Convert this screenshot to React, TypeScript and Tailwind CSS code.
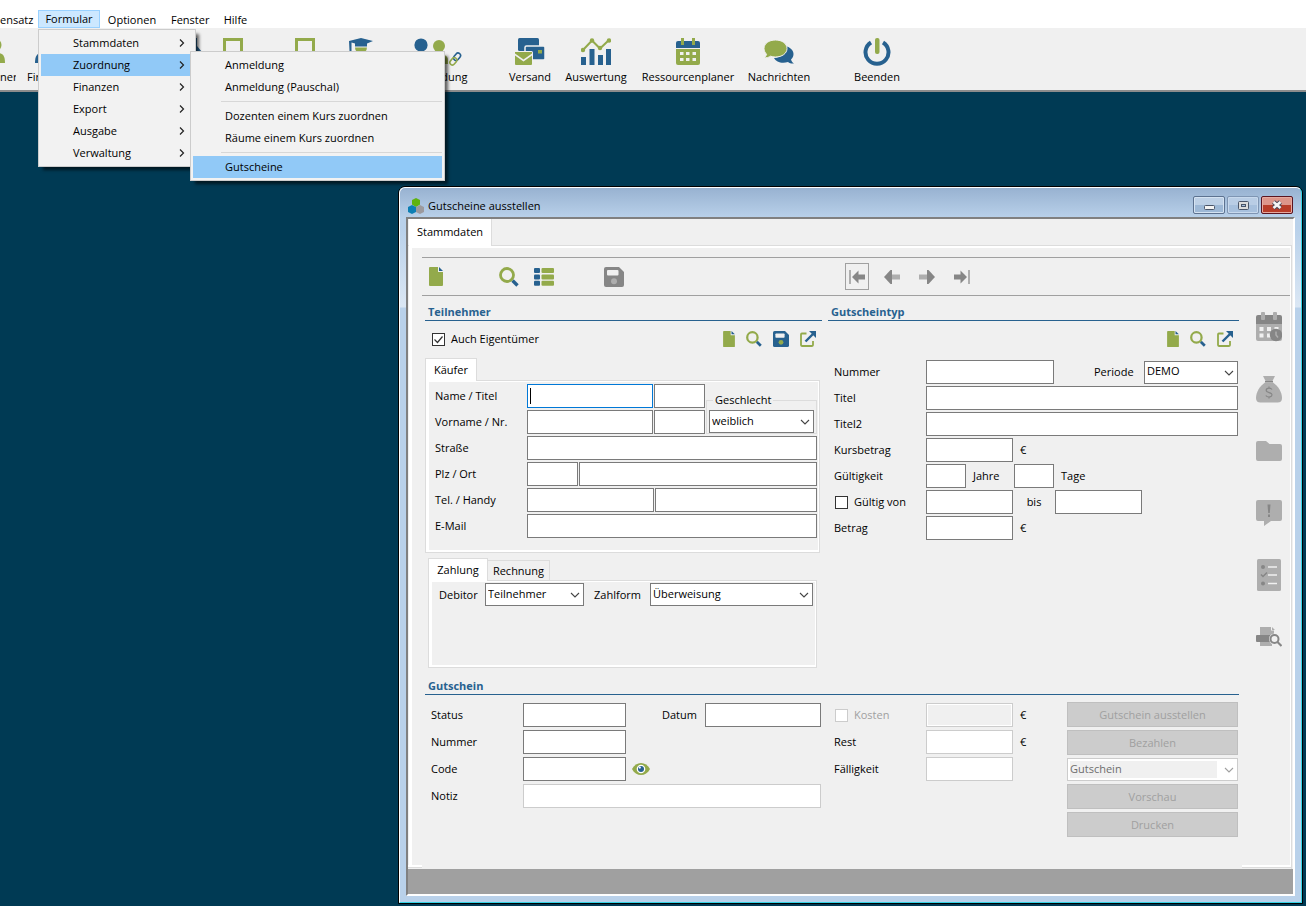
import React, { useState } from 'react';

const GREEN = '#93aa4b';
const BLUE = '#27618f';

type IconProps = { className?: string };

const FileIcon: React.FC<IconProps> = ({ className }) => (
    <svg viewBox="0 0 14 19" className={className}>
        <path d="M1 0h8v5h5v13a1 1 0 0 1-1 1H1a1 1 0 0 1-1-1V1a1 1 0 0 1 1-1z" fill={GREEN} />
        <path d="M10 0l4 4h-4z" fill={BLUE} />
    </svg>
);

const SearchIcon: React.FC<IconProps> = ({ className }) => (
    <svg viewBox="0 0 20 20" className={className}>
        <path d="M13.5 13.5l5 5" stroke={BLUE} strokeWidth="3.4" />
        <circle cx="8" cy="8" r="6.5" fill="none" stroke={GREEN} strokeWidth="2.8" />
    </svg>
);

const ListIcon: React.FC<IconProps> = ({ className }) => (
    <svg viewBox="0 0 20 18" className={className}>
        {[0, 6.4, 12.8].map((y) => (
            <g key={y}>
                <rect x="0" y={y} width="6" height="5" rx="1" fill={BLUE} />
                <rect x="7.5" y={y} width="12.5" height="5" rx="1" fill={GREEN} />
            </g>
        ))}
    </svg>
);

const SaveIcon: React.FC<IconProps & { body: string; dot: string }> = ({ className, body, dot }) => (
    <svg viewBox="0 0 20 20" className={className}>
        <path d="M2 0h13l5 5v13a2 2 0 0 1-2 2H2a2 2 0 0 1-2-2V2a2 2 0 0 1 2-2z" fill={body} />
        <rect x="3" y="3" width="11.5" height="5.5" rx="1" fill="#f0f0f0" />
        <circle cx="10" cy="14.2" r="3" fill={dot} />
    </svg>
);

const ExternalIcon: React.FC<IconProps> = ({ className }) => (
    <svg viewBox="0 0 16 16" className={className}>
        <path d="M6.5 2.5H1.9a.9.9 0 0 0-.9.9v10.7a.9.9 0 0 0 .9.9h10.2a.9.9 0 0 0 .9-.9V10" fill="none" stroke={GREEN} strokeWidth="1.8" />
        <path d="M5.5 10.5L13 3" stroke={BLUE} strokeWidth="2.4" />
        <path d="M9 0h7v7z" fill={BLUE} />
    </svg>
);

const ArrowIcon: React.FC<{ flip?: boolean; bar?: boolean }> = ({ flip, bar }) => (
    <svg viewBox="0 0 16 14" className={flip ? 'h-3.5 w-4 -scale-x-100' : 'h-3.5 w-4'}>
        {bar && <rect x="0" y="0" width="2" height="14" fill="#aeaeae" />}
        {bar ? (
            <path d="M3 7l6.500-6.500V4.500H16v5H9.500v4z" fill="#868686" />
        ) : (
            <>
                <rect x="8" y="4.500" width="8" height="5" fill="#aeaeae" />
                <path d="M0 7l6.500-7H8v14H6.500z" fill="#868686" />
            </>
        )}
    </svg>
);

const EyeIcon: React.FC = () => (
    <svg viewBox="0 0 18 12" className="h-3 w-[18px]">
        <path d="M0 6c2-4 5.400-6 9-6s7 2 9 6c-2 4-5.400 6-9 6S2 10 0 6z" fill={GREEN} />
        <circle cx="9" cy="6" r="4.300" fill="#fff" />
        <circle cx="9" cy="6" r="3" fill={BLUE} />
        <circle cx="7.800" cy="4.600" r="1.100" fill="#fff" />
    </svg>
);

const LogoIcon: React.FC = () => (
    <svg viewBox="0 0 16 16" className="size-4 shrink-0">
        <path d="M8 0l4 2v4.500L8 9 4 6.500V2z" fill="#5fb30f" />
        <path d="M4 7l4 2v5l-4 2-4-2V9z" fill="#0c7fb4" />
        <path d="M12 7l4 2v5l-4 2-4-2V9z" fill="#9c9a9e" />
    </svg>
);

/* main toolbar drawings */

const PersonIcon: React.FC<{ color: string }> = ({ color }) => (
    <svg viewBox="0 0 28 28" className="size-7 shrink-0">
        <circle cx="14" cy="7" r="6.500" fill={color} />
        <path d="M4 25c0-7 2-10 7-10h6c5 0 7 3 7 10z" fill={color} />
    </svg>
);

const SlopeIcon: React.FC = () => (
    <svg viewBox="0 0 30 28" className="h-7 w-[30px] shrink-0">
        <path d="M22 0h3v8l5 6v3h-8z" fill={BLUE} />
    </svg>
);

const BoardIcon: React.FC = () => (
    <svg viewBox="0 0 20 28" className="h-7 w-5 shrink-0">
        <rect x="1.500" y="1.500" width="17" height="22" fill="none" stroke={GREEN} strokeWidth="3" />
    </svg>
);

const GraduateIcon: React.FC = () => (
    <svg viewBox="0 0 24 28" className="h-7 w-6 shrink-0">
        <path d="M0 3l12-3 12 3-6 2.500v3H6v-3L2.500 4.500V13h-2z" fill={BLUE} />
        <path d="M6 9.500h12a6 6 0 0 1-12 0z" fill={GREEN} />
    </svg>
);

const AssignIcon: React.FC = () => (
    <svg viewBox="0 0 48 28" className="h-7 w-12 shrink-0">
        <circle cx="7" cy="7" r="6.600" fill={BLUE} />
        <circle cx="25" cy="8" r="6" fill={GREEN} />
        <path d="M17 26v-4c0-4 3-6 8-6s9 2 9 6v4z" fill={GREEN} />
        <rect x="41" y="14.500" width="5" height="8" rx="2.500" fill="none" stroke={BLUE} strokeWidth="1.600" transform="rotate(40 43 18)" />
        <rect x="37" y="19" width="5" height="8" rx="2.500" fill="none" stroke={GREEN} strokeWidth="1.600" transform="rotate(40 39 23)" />
    </svg>
);

const MailingIcon: React.FC = () => (
    <svg viewBox="0 0 30 28" className="h-7 w-[30px] shrink-0">
        <rect x="3" y="0" width="21" height="13" rx="1.500" fill={BLUE} />
        <path d="M10 22V9.500A1.500 1.500 0 0 1 11.500 8h17A1.500 1.500 0 0 1 30 9.500v11a1.500 1.500 0 0 1-1.500 1.500z" fill={BLUE} stroke="#f0f0f0" strokeWidth="1.500" />
        <rect x="23" y="12" width="4" height="3.500" fill={GREEN} />
        <rect x="-1" y="13" width="19" height="15" rx="1.500" fill="#f0f0f0" />
        <path d="M0 14h17v1.500l-8.500 6L0 15.500z" fill={GREEN} />
        <path d="M0 17.500l8.500 6 8.500-6V26a1 1 0 0 1-1 1H1a1 1 0 0 1-1-1z" fill={GREEN} />
    </svg>
);

const ChartIcon: React.FC = () => (
    <svg viewBox="0 0 30 28" className="h-7 w-[30px] shrink-0">
        <path d="M2 12l9-9.500 8 8L28 2" fill="none" stroke={GREEN} strokeWidth="2" />
        {[[2, 12], [11, 2.5], [19, 10], [28, 2.5]].map(([x, y]) => (
            <circle key={x} cx={x} cy={y} r="2.200" fill={GREEN} />
        ))}
        <path d="M0 19h5v8H0zM8.500 11h5v16h-5zM17 17h5v10h-5zM25 11h5v16h-5z" fill={BLUE} />
    </svg>
);

const PlannerIcon: React.FC = () => (
    <svg viewBox="0 0 24 28" className="h-7 w-6 shrink-0">
        <path d="M0 10V5a2 2 0 0 1 2-2h20a2 2 0 0 1 2 2v5z" fill={BLUE} />
        <path d="M0 11h24v14a2 2 0 0 1-2 2H2a2 2 0 0 1-2-2z" fill={GREEN} />
        <path d="M5 0h3v7H5zM16 0h3v7h-3z" fill={GREEN} />
        <path d="M4 14h3.500v3H4zM10 14h3.500v3H10zM16.500 14H20v3h-3.500zM4 20h3.500v3H4zM10 20h3.500v3H10zM16.500 20H20v3h-3.500z" fill="#f0f0f0" />
    </svg>
);

const ChatIcon: React.FC = () => (
    <svg viewBox="0 0 30 28" className="h-7 w-[30px] shrink-0">
        <path d="M21 8c5 1 8.500 4 8.500 8 0 2-.8 4-2.500 5.500.3 1.500 1.500 3 3 4-2.500.2-4.500-.4-6-1.500-6 2-12 0-14-4 7 0 12-5 11-12z" fill={BLUE} />
        <path d="M11.500 2C18 2 23 5.500 23 10.500S18 19 11.500 19c-2 0-3.500-.3-5-.8C4.800 19.400 2.500 20 0 19.800c1.400-1 2.300-2.300 2.500-3.600C1 14.700 0 12.700 0 10.500 0 5.500 5 2 11.500 2z" fill={GREEN} stroke="#f0f0f0" />
    </svg>
);

const PowerIcon: React.FC = () => (
    <svg viewBox="0 0 28 28" className="size-7 shrink-0">
        <path d="M8 4.500a11.500 11.500 0 1 0 12 0" fill="none" stroke={BLUE} strokeWidth="4" />
        <rect x="12" y="0" width="4.500" height="16" rx="2" fill={GREEN} />
    </svg>
);

/* side bar drawings, all greyed out */

const SideCalendar: React.FC = () => (
    <svg viewBox="0 0 26 30" className="h-[30px] w-[26px]">
        <path d="M0 12V5a2 2 0 0 1 2-2h22a2 2 0 0 1 2 2v7z" fill="#868686" />
        <path d="M0 12h26v15a2 2 0 0 1-2 2H2a2 2 0 0 1-2-2z" fill="#aeaeae" />
        <rect x="5" y="0" width="4" height="8" rx="1" fill="#aeaeae" />
        <rect x="17" y="0" width="4" height="8" rx="1" fill="#aeaeae" />
        <path d="M3.500 15h4v4h-4zM11 15h4v4h-4zM18.500 15h4v4h-4zM3.500 21.500h4v4h-4zM11 21.500h4v4h-4z" fill="#f0f0f0" />
        <circle cx="20" cy="23" r="6.200" fill="#868686" />
        <path d="M20 19.500V23l2 2.500" fill="none" stroke="#aeaeae" strokeWidth="1.500" />
    </svg>
);

const SideMoney: React.FC = () => (
    <svg viewBox="0 0 26 27" className="h-[27px] w-[26px]">
        <path d="M7 0h12l-2.500 5h-7z" fill="#aeaeae" />
        <path d="M9 5h8v1.500H9z" fill="#868686" />
        <path d="M9 6.500h8C22 10 26 16 26 22c0 3-1.500 4.500-4.500 4.500h-17C1.500 26.500 0 25 0 22 0 16 4 10 9 6.500z" fill="#aeaeae" />
        <path d="M16 13.500c-.8-1-1.800-1.300-3-1.300-1.600 0-2.800.8-2.800 2.100 0 3 5.800 1.500 5.800 4.500 0 1.400-1.300 2.200-3 2.200-1.300 0-2.500-.5-3.200-1.500M13 10.500V12M13 21v1.500" fill="none" stroke="#868686" strokeWidth="1.200" />
    </svg>
);

const SideFolder: React.FC = () => (
    <svg viewBox="0 0 26 20" className="h-5 w-[26px]">
        <path d="M2 0h8l3.500 3H24a2 2 0 0 1 2 2v13a2 2 0 0 1-2 2H2a2 2 0 0 1-2-2V2a2 2 0 0 1 2-2z" fill="#aeaeae" />
    </svg>
);

const SideAlert: React.FC = () => (
    <svg viewBox="0 0 26 26" className="size-[26px]">
        <path d="M2 0h22a2 2 0 0 1 2 2v17a2 2 0 0 1-2 2h-9l-7 5v-5H2a2 2 0 0 1-2-2V2a2 2 0 0 1 2-2z" fill="#aeaeae" />
        <path d="M11.500 4.500h3l-.7 8.500h-1.600zM12 14.500h2v2.500h-2z" fill="#868686" />
    </svg>
);

const SideChecklist: React.FC = () => (
    <svg viewBox="0 0 24 32" className="h-8 w-6">
        <rect width="24" height="32" rx="1.500" fill="#aeaeae" />
        <circle cx="6" cy="8" r="2" fill="#868686" />
        <circle cx="6" cy="24.500" r="2" fill="#868686" />
        <path d="M4 15.500l2 2 4-4" fill="none" stroke="#868686" strokeWidth="1.500" />
        <path d="M11 8h9M11 16h9M11 24.500h9" stroke="#f0f0f0" strokeWidth="1.500" />
    </svg>
);

const SidePreview: React.FC = () => (
    <svg viewBox="0 0 26 20" className="h-5 w-[26px]">
        <path d="M4 0h11v3.500h3V10H4zM16 0l3 3h-3zM4 13h12v6H4z" fill="#aeaeae" />
        <path d="M1 8h15v7H1a1 1 0 0 1-1-1V9a1 1 0 0 1 1-1z" fill="#868686" />
        <circle cx="18.500" cy="12" r="5.500" fill="#f0f0f0" />
        <circle cx="18.500" cy="12" r="4" fill="#f0f0f0" stroke="#868686" strokeWidth="2" />
        <path d="M21.500 15l4 4" stroke="#868686" strokeWidth="2.200" />
    </svg>
);

/* form controls */

interface TextBoxProps {
    id: string;
    className: string;
    label?: string;
    tone?: 'normal' | 'light' | 'off';
}

const TextBox: React.FC<TextBoxProps> = ({ id, className, label, tone = 'normal' }) => {
    const tones = {
        normal: 'border-[#7a7a7a] bg-white focus:border-[#0078d7]',
        light: 'border-[#cccccc] bg-white',
        off: 'border-[#cccccc] bg-[#f0f0f0] shadow-[inset_0_0_0_1px_#fff]',
    };
    return (
        <input
            id={id}
            type="text"
            aria-label={label}
            disabled={tone === 'off'}
            className={`h-6 min-w-0 rounded-none border px-0.5 outline-none ${tones[tone]} ${className}`}
        />
    );
};

const Select: React.FC<{ id: string; className: string; options: string[]; disabled?: boolean; label?: string }> = ({
    id,
    className,
    options,
    disabled,
    label,
}) => (
    <div className={`relative ${className}`}>
        <select
            id={id}
            aria-label={label}
            disabled={disabled}
            className="block h-[23px] w-full appearance-none rounded-none border border-[#7a7a7a] bg-white pr-5 pb-0.5 pl-0.5 leading-4 outline-none disabled:border-[#cccccc] disabled:bg-[linear-gradient(#f0f0f0,#f0f0f0)] disabled:bg-size-[calc(100%-22px)_calc(100%-4px)] disabled:bg-position-[2px_2px] disabled:bg-no-repeat disabled:text-[#6d6d6d] disabled:opacity-100"
        >
            {options.map((option) => (
                <option key={option}>{option}</option>
            ))}
        </select>
        <svg viewBox="0 0 10 6" className="pointer-events-none absolute top-[9px] right-1 h-1.5 w-2.5">
            <path d="M1 1l4 4 4-4" fill="none" stroke={disabled ? '#a0a0a0' : '#444'} strokeWidth="1.100" />
        </svg>
    </div>
);

const CheckBox: React.FC<{
    id: string;
    text: string;
    checked: boolean;
    onChange: (value: boolean) => void;
    disabled?: boolean;
}> = ({ id, text, checked, onChange, disabled }) => (
    <label htmlFor={id} className={`flex items-center gap-1.5 ${disabled ? 'text-[#a0a0a0]' : ''}`}>
        <span className="relative flex">
            <input
                id={id}
                type="checkbox"
                checked={checked}
                disabled={disabled}
                onChange={(e) => onChange(e.target.checked)}
                className="size-[13px] appearance-none border border-[#333] bg-white disabled:border-[#cccccc]"
            />
            {checked && (
                <svg viewBox="0 0 13 13" className="pointer-events-none absolute inset-0 size-[13px]">
                    <path d="M2.500 6.500l3 3 5-6" fill="none" stroke="#333" strokeWidth="1.200" />
                </svg>
            )}
        </span>
        {text}
    </label>
);

const SectionTitle: React.FC<{ children: React.ReactNode }> = ({ children }) => (
    <h2 className="border-b border-[#27618f] px-[3px] font-bold text-[#27618f]">{children}</h2>
);

const Row: React.FC<{ label: string; htmlFor: string; labelClass: string; children: React.ReactNode }> = ({
    label,
    htmlFor,
    labelClass,
    children,
}) => (
    <div className="flex items-center">
        <label htmlFor={htmlFor} className={`shrink-0 ${labelClass}`}>
            {label}
        </label>
        {children}
    </div>
);

const IconButton: React.FC<{ name: string; children: React.ReactNode }> = ({ name, children }) => (
    <button type="button" aria-label={name} className="flex shrink-0">
        {children}
    </button>
);

const ActionButton: React.FC<{ children: React.ReactNode }> = ({ children }) => (
    <button type="button" disabled className="h-[25px] w-full border border-[#bfbfbf] bg-[#cccccc] text-[#a0a0a0]">
        {children}
    </button>
);

/* menus */

const formularMenu = ['Stammdaten', 'Zuordnung', 'Finanzen', 'Export', 'Ausgabe', 'Verwaltung'];
const zuordnungMenu = [
    ['Anmeldung', 'Anmeldung (Pauschal)'],
    ['Dozenten einem Kurs zuordnen', 'Räume einem Kurs zuordnen'],
    ['Gutscheine'],
];

const popupClass = 'absolute border border-[#cccccc] bg-[#f2f2f2] p-0.5 shadow-[4px_4px_3px_-1px_rgba(0,0,0,0.6)]';

const MenuBar: React.FC = () => (
    <nav className="relative z-20 flex h-7 items-end bg-white">
        <button type="button" aria-label="Datensatz" className="w-[31px] shrink-0">ensatz</button>
        <div className="relative ml-[7px]">
            <button type="button" className="block h-[18px] w-[62px] border border-[#99d1ff] bg-[#cce8ff]">
                Formular
            </button>
            <div className={`${popupClass} top-[19px] left-0 w-[158px]`}>
                {formularMenu.map((item) => (
                    <button
                        key={item}
                        type="button"
                        className={`flex h-[22px] w-full items-center justify-between pr-1 pl-8 ${item === 'Zuordnung' ? 'bg-[#91c9f7]' : ''}`}
                    >
                        {item}
                        <svg viewBox="0 0 6 8" className="mr-1 h-2 w-1.5">
                            <path d="M1 .5L4.500 4 1 7.500" fill="none" stroke="#222" strokeWidth="1.200" />
                        </svg>
                    </button>
                ))}
            </div>
            <div className={`${popupClass} top-[41px] left-[152px] w-[255px]`}>
                {zuordnungMenu.map((group, i) => (
                    <div key={group[0]}>
                        {i > 0 && <div className="my-[3px] ml-7 h-px bg-[#d7d7d7]" />}
                        {group.map((item) => (
                            <button
                                key={item}
                                type="button"
                                className={`flex h-[22px] w-full items-center pl-8 whitespace-nowrap ${item === 'Gutscheine' ? 'bg-[#91c9f7]' : ''}`}
                            >
                                {item}
                            </button>
                        ))}
                    </div>
                ))}
            </div>
        </div>
        <button type="button" className="ml-[7px] w-[50px] whitespace-nowrap">Optionen</button>
        <button type="button" className="ml-3.5 w-[38px] whitespace-nowrap">Fenster</button>
        <button type="button" className="ml-3.5 w-[25px] whitespace-nowrap">Hilfe</button>
    </nav>
);

const toolClass = 'flex shrink-0 flex-col items-center gap-[3px] whitespace-nowrap';

const Toolbar: React.FC = () => (
    <header className="flex h-16 items-start overflow-hidden border-b-2 border-[#8c8c8c] bg-[#f0f0f0] pt-2.5">
        <button type="button" aria-label="Teilnehmer" className="flex w-[16px] shrink-0 flex-col items-end gap-[3px] overflow-hidden">
            <span className="mr-[7px]"><PersonIcon color={GREEN} /></span>
            <span className="w-full text-left">ner</span>
        </button>
        <button type="button" className={`${toolClass} ml-1.5 w-[46px]`}><PersonIcon color={BLUE} />Firmen</button>
        <button type="button" aria-label="Kurse" className={`${toolClass} ml-[109px] w-5`}><SlopeIcon /></button>
        <button type="button" aria-label="Räume" className={`${toolClass} w-[72px]`}><BoardIcon /></button>
        <button type="button" aria-label="Orte" className={`${toolClass} w-[72px]`}><BoardIcon /></button>
        <button type="button" aria-label="Dozenten" className={`${toolClass} w-10`}><GraduateIcon /></button>
        <button type="button" className={`${toolClass} w-[114px]`}><AssignIcon />Anmeldung</button>
        <button type="button" className={`${toolClass} ml-2 w-[54px]`}><MailingIcon />Versand</button>
        <button type="button" className={`${toolClass} w-[78px]`}><ChartIcon />Auswertung</button>
        <button type="button" className={`${toolClass} w-[106px]`}><PlannerIcon />Ressourcenplaner</button>
        <button type="button" className={`${toolClass} w-[76px]`}><ChatIcon />Nachrichten</button>
        <button type="button" className={`${toolClass} ml-[30px] w-[60px]`}><PowerIcon />Beenden</button>
    </header>
);

const TitleBar: React.FC = () => (
    <div className="flex h-[29px] items-end gap-1 px-2 pb-[3px]">
        <LogoIcon />
        <h1>Gutscheine ausstellen</h1>
        <div className="ml-auto flex gap-0.5">
            <button type="button" aria-label="Minimieren" className="flex h-[18px] w-8 items-center justify-center rounded-xs border border-[#5d7290] bg-linear-to-b from-[#bdd0e6] from-50% to-[#9db8d6] to-50% shadow-[inset_0_0_0_1px_#d5e3f2]">
                <svg viewBox="0 0 11 5" className="mt-1 h-[5px] w-[11px]">
                    <rect x=".5" y=".5" width="10" height="4" rx="1" fill="#f4f4f4" stroke="#4a5568" />
                </svg>
            </button>
            <button type="button" aria-label="Maximieren" className="flex h-[18px] w-8 items-center justify-center rounded-xs border border-[#7f95b3] bg-linear-to-b from-[#b9cde5] from-50% to-[#a7c0dd] to-50% shadow-[inset_0_0_0_1px_#c8d9ed]">
                <svg viewBox="0 0 11 9" className="h-[9px] w-[11px]">
                    <rect x=".5" y=".5" width="10" height="8" rx="1" fill="#dcdcdc" stroke="#4a5568" />
                    <rect x="3.500" y="3.500" width="4" height="2" fill="#a8c0dd" stroke="#4a5568" />
                </svg>
            </button>
            <button type="button" aria-label="Schließen" className="flex h-[18px] w-8 items-center justify-center rounded-xs border border-[#5b1420] bg-linear-to-b from-[#dd958a] from-50% to-[#b83c28] to-50% shadow-[inset_0_0_0_1px_#e6aaa0]">
                <svg viewBox="0 0 12 10" className="h-2.5 w-3">
                    <path d="M2.500 2l7 6M9.500 2l-7 6" stroke="#4a4a5a" strokeWidth="4.500" />
                    <path d="M2.500 2l7 6M9.500 2l-7 6" stroke="#f5f5f5" strokeWidth="2.600" />
                </svg>
            </button>
        </div>
    </div>
);

const RecordBar: React.FC = () => (
    <div className="flex h-[39px] items-center border-y border-[#a0a0a0] pl-[7px]">
        <IconButton name="Neu"><FileIcon className="h-[19px] w-3.5" /></IconButton>
        <span className="ml-14"><IconButton name="Suchen"><SearchIcon className="size-5" /></IconButton></span>
        <span className="ml-[15px]"><IconButton name="Liste"><ListIcon className="h-[18px] w-5" /></IconButton></span>
        <span className="ml-[50px]"><IconButton name="Speichern"><SaveIcon className="h-5 w-5" body="#868686" dot="#aeaeae" /></IconButton></span>
        <div className="ml-[221px] flex gap-[11px]">
            <button type="button" aria-label="Erster" className="flex h-[27px] w-6 items-center justify-center border border-[#a0a0a0]"><ArrowIcon bar /></button>
            <button type="button" aria-label="Zurück" className="flex h-[27px] w-6 items-center justify-center"><ArrowIcon /></button>
            <button type="button" aria-label="Weiter" className="flex h-[27px] w-6 items-center justify-center"><ArrowIcon flip /></button>
            <button type="button" aria-label="Letzter" className="flex h-[27px] w-6 items-center justify-center"><ArrowIcon flip bar /></button>
        </div>
    </div>
);

const tabPanel = 'border border-[#dcdcdc]';
const tabPanelInner = 'border-t border-r border-b-2 border-l-[3px] border-white';

const Teilnehmer: React.FC = () => {
    const [owner, setOwner] = useState(true);
    const label = 'w-[92px]';
    return (
        <section className="flex flex-col">
            <div className="pt-2"><SectionTitle>Teilnehmer</SectionTitle></div>
            <div className="flex h-9 items-center justify-between pr-1.5 pl-[7px]">
                <CheckBox id="auch-eigentuemer" text="Auch Eigentümer" checked={owner} onChange={setOwner} />
                <div className="flex items-center gap-[11px]">
                    <IconButton name="Teilnehmer neu"><FileIcon className="h-4 w-3" /></IconButton>
                    <IconButton name="Teilnehmer suchen"><SearchIcon className="size-4" /></IconButton>
                    <IconButton name="Teilnehmer speichern"><SaveIcon className="size-4" body={BLUE} dot={GREEN} /></IconButton>
                    <IconButton name="Teilnehmer öffnen"><ExternalIcon className="size-4" /></IconButton>
                </div>
            </div>
            <div className="mt-px mr-0.5">
                <button type="button" className="relative z-10 -mb-px block h-[23px] w-[52px] border border-b-0 border-[#dcdcdc] bg-white">Käufer</button>
                <div className={tabPanel}>
                    <div className={`${tabPanelInner} flex flex-col gap-0.5 pt-0.5 pr-px pb-3 pl-1.5`}>
                        <div className="flex items-end gap-px">
                            <div className="flex min-w-0 flex-1 flex-col gap-0.5">
                                <Row label="Name / Titel" htmlFor="name" labelClass={label}>
                                    <div className="relative flex min-w-0 flex-1">
                                        <input id="name" type="text" className="h-6 w-full min-w-0 border border-[#0078d7] bg-white px-1 outline-none" />
                                        <span className="absolute top-1 left-[3px] h-4 w-px bg-black" />
                                    </div>
                                    <TextBox id="anrede" label="Titel" className="ml-px w-[51px]" />
                                </Row>
                                <Row label="Vorname / Nr." htmlFor="vorname" labelClass={label}>
                                    <TextBox id="vorname" className="flex-1" />
                                    <TextBox id="nr" label="Nr." className="ml-px w-[51px]" />
                                </Row>
                            </div>
                            <fieldset className="w-[111px] border border-[#dcdcdc] px-0.5">
                                <legend className="ml-1 px-0.5">Geschlecht</legend>
                                <Select id="geschlecht" label="Geschlecht" className="mt-0.5" options={['weiblich', 'männlich']} />
                            </fieldset>
                        </div>
                        <Row label="Straße" htmlFor="strasse" labelClass={label}>
                            <TextBox id="strasse" className="flex-1" />
                        </Row>
                        <Row label="Plz / Ort" htmlFor="plz" labelClass={label}>
                            <TextBox id="plz" className="w-[51px]" />
                            <TextBox id="ort" label="Ort" className="ml-px flex-1" />
                        </Row>
                        <Row label="Tel. / Handy" htmlFor="tel" labelClass={label}>
                            <TextBox id="tel" className="w-[127px]" />
                            <TextBox id="handy" label="Handy" className="ml-px flex-1" />
                        </Row>
                        <Row label="E-Mail" htmlFor="email" labelClass={label}>
                            <TextBox id="email" className="flex-1" />
                        </Row>
                    </div>
                </div>
            </div>
            <div className="mt-[5px] mr-[5px] ml-[3px]">
                <div className="relative z-10 -mb-px flex items-end">
                    <button type="button" className="h-[23px] w-[60px] border border-b-0 border-[#dcdcdc] bg-white">Zahlung</button>
                    <button type="button" className="mb-px h-5 w-[62px] border border-b-0 border-l-0 border-[#dcdcdc]">Rechnung</button>
                </div>
                <div className={tabPanel}>
                    <div className={`${tabPanelInner} flex h-[86px] items-start pt-px pr-0.5 pl-[7px]`}>
                        <label htmlFor="debitor" className="w-[46px] pt-1">Debitor</label>
                        <Select id="debitor" className="w-[99px]" options={['Teilnehmer']} />
                        <label htmlFor="zahlform" className="ml-2.5 w-14 pt-1">Zahlform</label>
                        <Select id="zahlform" className="flex-1" options={['Überweisung']} />
                    </div>
                </div>
            </div>
        </section>
    );
};

const Gutscheintyp: React.FC = () => {
    const [valid, setValid] = useState(false);
    const label = 'w-[92px]';
    return (
        <section className="flex flex-col">
            <div className="pt-2"><SectionTitle>Gutscheintyp</SectionTitle></div>
            <div className="flex h-9 items-center justify-end gap-[11px] pr-1.5">
                <IconButton name="Typ neu"><FileIcon className="h-4 w-3" /></IconButton>
                <IconButton name="Typ suchen"><SearchIcon className="size-4" /></IconButton>
                <IconButton name="Typ öffnen"><ExternalIcon className="size-4" /></IconButton>
            </div>
            <div className="mt-[3px] flex flex-col gap-0.5 pr-px pl-1.5">
                <Row label="Nummer" htmlFor="typ-nummer" labelClass={label}>
                    <TextBox id="typ-nummer" className="w-32" />
                    <label htmlFor="periode" className="ml-auto w-[50px]">Periode</label>
                    <Select id="periode" className="w-[94px]" options={['DEMO']} />
                </Row>
                <Row label="Titel" htmlFor="typ-titel" labelClass={label}>
                    <TextBox id="typ-titel" className="flex-1" />
                </Row>
                <Row label="Titel2" htmlFor="typ-titel2" labelClass={label}>
                    <TextBox id="typ-titel2" className="flex-1" />
                </Row>
                <Row label="Kursbetrag" htmlFor="kursbetrag" labelClass={label}>
                    <TextBox id="kursbetrag" className="w-[87px]" />
                    <span className="ml-[7px]">€</span>
                </Row>
                <Row label="Gültigkeit" htmlFor="jahre" labelClass={label}>
                    <TextBox id="jahre" className="w-10" />
                    <label htmlFor="jahre" className="ml-[7px] w-[41px]">Jahre</label>
                    <TextBox id="tage" className="w-10" />
                    <label htmlFor="tage" className="ml-[7px]">Tage</label>
                </Row>
                <div className="flex items-center">
                    <div className="w-[92px] shrink-0 pl-px">
                        <CheckBox id="gueltig" text="Gültig von" checked={valid} onChange={setValid} />
                    </div>
                    <TextBox id="gueltig-von" label="Gültig von" className="w-[87px]" />
                    <label htmlFor="gueltig-bis" className="w-[42px] text-center">bis</label>
                    <TextBox id="gueltig-bis" className="w-[87px]" />
                </div>
                <Row label="Betrag" htmlFor="betrag" labelClass={label}>
                    <TextBox id="betrag" className="w-[87px]" />
                    <span className="ml-[7px]">€</span>
                </Row>
            </div>
        </section>
    );
};

const columns = 'grid grid-cols-[minmax(0,397fr)_minmax(0,411fr)] gap-x-1.5';

const Gutschein: React.FC = () => {
    const [costs, setCosts] = useState(false);
    const label = 'w-[92px]';
    return (
        <section>
            <div className="pt-2.5"><SectionTitle>Gutschein</SectionTitle></div>
            <div className={columns}>
                <div className="mt-2 mr-px flex flex-col gap-[3px] pl-1.5">
                    <Row label="Status" htmlFor="status" labelClass={label}>
                        <TextBox id="status" className="w-[103px]" />
                        <label htmlFor="datum" className="ml-9 w-[43px]">Datum</label>
                        <TextBox id="datum" className="flex-1" />
                    </Row>
                    <Row label="Nummer" htmlFor="nummer" labelClass={label}>
                        <TextBox id="nummer" className="w-[103px]" />
                    </Row>
                    <Row label="Code" htmlFor="code" labelClass={label}>
                        <TextBox id="code" className="mr-1.5 w-[103px]" />
                        <IconButton name="Code anzeigen"><EyeIcon /></IconButton>
                    </Row>
                    <Row label="Notiz" htmlFor="notiz" labelClass={label}>
                        <TextBox id="notiz" tone="light" className="flex-1" />
                    </Row>
                </div>
                <div className="flex justify-between pr-px pl-1.5">
                    <div className="mt-2 flex flex-col gap-[3px]">
                        <div className="flex items-center">
                            <div className="w-[92px] shrink-0 pl-px">
                                <CheckBox id="kosten" text="Kosten" checked={costs} onChange={setCosts} disabled />
                            </div>
                            <TextBox id="kosten-betrag" label="Kosten" tone="off" className="w-[87px]" />
                            <span className="ml-[7px]">€</span>
                        </div>
                        <Row label="Rest" htmlFor="rest" labelClass={label}>
                            <TextBox id="rest" tone="light" className="w-[87px]" />
                            <span className="ml-[7px]">€</span>
                        </Row>
                        <Row label="Fälligkeit" htmlFor="faelligkeit" labelClass={label}>
                            <TextBox id="faelligkeit" tone="light" className="w-[87px]" />
                        </Row>
                    </div>
                    <div className="mt-[7px] flex w-[171px] flex-col gap-[3px]">
                        <ActionButton>Gutschein ausstellen</ActionButton>
                        <ActionButton>Bezahlen</ActionButton>
                        <Select id="druckart" label="Druckart" className="" options={['Gutschein']} disabled />
                        <ActionButton>Vorschau</ActionButton>
                        <ActionButton>Drucken</ActionButton>
                    </div>
                </div>
            </div>
        </section>
    );
};

const sideTools = [
    { name: 'Termine', Icon: SideCalendar },
    { name: 'Zahlungen', Icon: SideMoney },
    { name: 'Dokumente', Icon: SideFolder },
    { name: 'Hinweise', Icon: SideAlert },
    { name: 'Aufgaben', Icon: SideChecklist },
    { name: 'Druckvorschau', Icon: SidePreview },
];

const SideBar: React.FC = () => (
    <aside className="w-[51px] shrink-0 pl-[17px]">
        {sideTools.map(({ name, Icon }) => (
            <button key={name} type="button" aria-label={name} className="flex h-[62px] w-[26px] items-center justify-center">
                <Icon />
            </button>
        ))}
    </aside>
);

const VoucherWindow: React.FC = () => (
    <div className="flex min-w-0 flex-1 flex-col rounded-t-[7px] border border-black">
        <div className="flex flex-1 flex-col rounded-t-md border border-t-white border-r-[#35d3e6] border-b-[#35d3e6] border-l-white bg-[#b9d1ea] bg-[linear-gradient(#98b2d1,#b9d1ea_30px,#b9d1ea_40px,#dbe7f4_119px,#b9d1ea_120px)]">
            <TitleBar />
            <div className="mx-1.5 mb-1.5 flex flex-1 flex-col border-2 border-t-[#808080] border-r-white border-b-white border-l-[#808080] bg-[#f0f0f0]">
                <div className="relative z-10 -mb-px flex pl-px">
                    <button type="button" className="h-[27px] w-[83px] border-r border-[#dcdcdc] bg-white pb-0.5">Stammdaten</button>
                </div>
                <div className="mr-px flex flex-1 flex-col border-t border-r border-[#dcdcdc]">
                    <div className="ml-px flex flex-1 flex-col border-t-2 border-r border-l-[3px] border-white pt-[9px]">
                        <div className="pl-2.5"><RecordBar /></div>
                        <div className="flex pl-[13px]">
                            <main className="min-w-0 flex-1">
                                <div className={columns}>
                                    <Teilnehmer />
                                    <Gutscheintyp />
                                </div>
                                <Gutschein />
                            </main>
                            <SideBar />
                        </div>
                    </div>
                    <div className="mb-px flex justify-between">
                        <div className="h-[3px] w-3.5 border-t-2 border-b border-t-white border-b-[#dcdcdc]" />
                        <div className="h-[3px] w-[49px] border-t-2 border-b border-t-white border-b-[#dcdcdc]" />
                    </div>
                </div>
                <footer className="h-[25px] bg-[#a0a0a0]" />
            </div>
        </div>
    </div>
);

const App: React.FC = () => (
    <div className="flex min-h-screen flex-col overflow-hidden bg-[#003a54] font-['Open_Sans','Noto_Sans',sans-serif] text-[11px] leading-4 text-black">
        <MenuBar />
        <Toolbar />
        <div className="flex flex-1 pt-[94px] pr-[3px] pb-0.5 pl-[398px]">
            <VoucherWindow />
        </div>
    </div>
);

export default App;
